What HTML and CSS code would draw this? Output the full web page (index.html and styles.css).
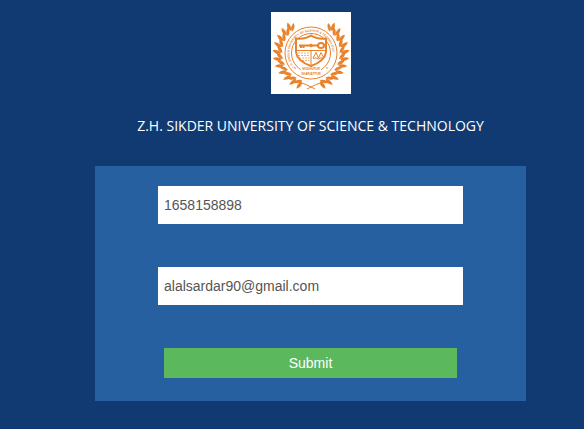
FILE: index.html
```html
<!DOCTYPE html>
<html lang="en">
<head>
<meta charset="utf-8">
<meta name="viewport" content="width=device-width, initial-scale=1">
<title>Z.H. Sikder University of Science &amp; Technology</title>
<link rel="stylesheet" href="styles.css">
</head>
<body>
<main class="page">
  <svg class="logo" viewBox="0 0 80 82" aria-hidden="true">
    <defs>
      <g id="leaf">
        <path d="M1 -28.500Q-5 -29 -6 -34Q0 -33.500 1 -28.500Z"/>
        <path d="M1 -29.500Q-3 -34 -1.500 -38.500Q4 -34.500 1 -29.500Z"/>
      </g>
      <g id="branch">
        <use href="#leaf" transform="rotate(40)"/>
        <use href="#leaf" transform="rotate(52)"/>
        <use href="#leaf" transform="rotate(64)"/>
        <use href="#leaf" transform="rotate(76)"/>
        <use href="#leaf" transform="rotate(88)"/>
        <use href="#leaf" transform="rotate(100)"/>
        <use href="#leaf" transform="rotate(112)"/>
        <use href="#leaf" transform="rotate(124)"/>
        <use href="#leaf" transform="rotate(136)"/>
        <use href="#leaf" transform="rotate(148)"/>
        <use href="#leaf" transform="rotate(160)"/>
        <path class="stem" d="M12 29Q5 31 -4 36"/>
      </g>
      <path id="ring-path" d="M25 56.500A21.500 21.500 0 1 1 55 56.500"/>
    </defs>
    <rect class="paper" width="80" height="82"/>
    <g class="ink">
      <use href="#branch" transform="translate(40 41)"/>
      <use href="#branch" transform="translate(40 41) scale(-1 1)"/>
      <circle class="disc" cx="40" cy="41" r="27"/>
      <circle class="line" cx="40" cy="41" r="26"/>
      <circle class="line" cx="40" cy="41" r="19.500"/>
      <text class="ring-text"><textPath href="#ring-path" startOffset="2">Z.H. SIKDER UNIVERSITY OF SCIENCE &amp; TECHNOLOGY</textPath></text>
      <path class="shield" d="M25 26.500Q34 27.500 40 23.500Q46 27.500 55 26.500V40Q54 49 40 54Q26 49 25 40Z"/>
      <path class="line" d="M25 38.500H55M40 38.500V54M42 46L45 40.500L47.500 46L50 40.500L53 46M42 46.500Q45 45 47.500 47Q50 45 53 46.500"/>
      <path class="fine" d="M27 41H38.500M27 43.500H38.500M28 46H38.500M31 48.500H38.500"/>
      <path class="key" d="M28 33.500H47M30 33.500V36M32.500 33.500V36"/>
      <ellipse class="key" cx="50" cy="33.500" rx="3" ry="2.500"/>
      <path d="M40 31.500L42.500 33.500L40 35.500L37.500 33.500Z"/>
      <rect class="disc" x="30" y="55" width="20" height="6"/>
      <text class="place" x="40" y="58">MODHUPUR</text>
      <text class="place" x="40" y="63">SHARIATPUR</text>
      <circle cx="24" cy="56" r=".8"/>
      <circle cx="56" cy="56" r=".8"/>
    </g>
  </svg>
  <h1 class="title">Z.H. SIKDER UNIVERSITY OF SCIENCE &amp; TECHNOLOGY</h1>
  <form class="card">
    <input class="field" type="text" name="student" aria-label="Student ID" value="1658158898">
    <input class="field" type="email" name="email" aria-label="Email" value="alalsardar90@gmail.com">
    <button class="submit" type="submit">Submit</button>
  </form>
</main>
</body>
</html>
```
FILE: styles.css
```css
* {
  box-sizing: border-box;
}

body {
  margin: 0;
  background: #113a72;
}

.page {
  display: flex;
  flex-direction: column;
  align-items: center;
  padding: 12px 58px 28px 95px;
}

.logo {
  width: 80px;
  height: 82px;
}

.title {
  margin: 22px 0 30px;
  color: #fff;
  font: 400 14px/20px "Open Sans", sans-serif;
  text-align: center;
}

.card {
  display: flex;
  flex-direction: column;
  align-items: center;
  gap: 43px;
  width: 100%;
  padding: 20px 63px 23px;
  background: #2660a0;
}

.field {
  width: 100%;
  height: 38px;
  padding: 0 6px;
  border: 0;
  border-radius: 0;
  background: #fff;
  color: #555;
  font: 14px/20px "Liberation Sans", Arial, sans-serif;
}

.submit {
  width: 96%;
  height: 30px;
  padding: 0;
  border: 0;
  background: #5cb85c;
  color: #fff;
  font: 14px/20px "Liberation Sans", Arial, sans-serif;
}

.paper,
.ink .disc {
  fill: #fff;
}

.ink {
  fill: #e8822b;
}

.line,
.stem,
.fine,
.key,
.shield {
  fill: none;
  stroke: #e8822b;
  stroke-width: 1;
}

.fine {
  stroke-dasharray: 2 1;
  opacity: 0.6;
}

.key {
  stroke-width: 2;
}

.shield {
  fill: #fff;
  stroke-width: 2;
}

.ring-text,
.place {
  font-family: "Liberation Sans", Arial, sans-serif;
  font-weight: 700;
  font-size: 3px;
}

.place {
  text-anchor: middle;
}
```
